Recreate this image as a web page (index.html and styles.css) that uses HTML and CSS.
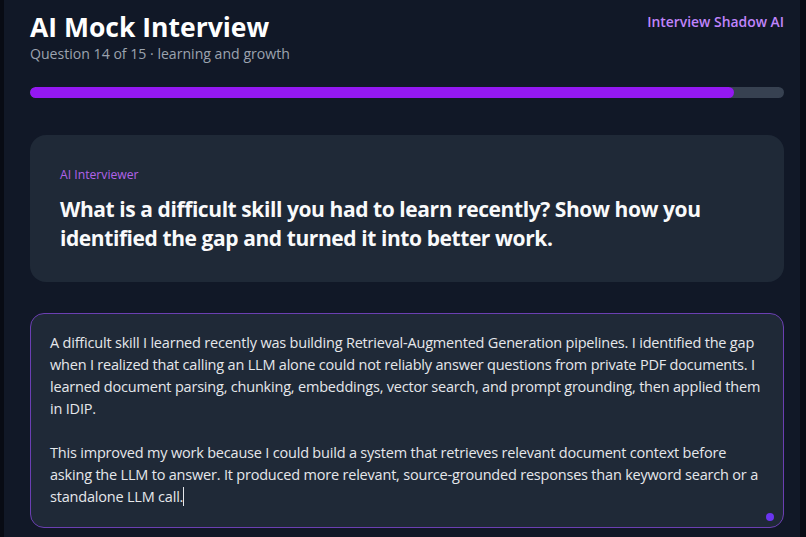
FILE: index.html
```html
<!DOCTYPE html>
<html lang="en">
<head>
<meta charset="utf-8">
<title>AI Mock Interview</title>
<link rel="stylesheet" href="styles.css">
</head>
<body>
<main class="app">
  <header class="top">
    <div class="heading">
      <h1 class="title">AI Mock Interview</h1>
      <p class="subtitle">Question 14 of 15 · learning and growth</p>
    </div>
    <div class="brand">Interview Shadow AI</div>
  </header>

  <div class="progress"><div class="progress-fill" style="width: 93.33%"></div></div>

  <section class="question-card">
    <div class="label">AI Interviewer</div>
    <h2 class="question">What is a difficult skill you had to learn recently? Show how you<br>identified the gap and turned it into better work.</h2>
  </section>

  <div class="answer">
    <div class="answer-text">A difficult skill I learned recently was building Retrieval-Augmented Generation pipelines. I identified the gap<br>when I realized that calling an LLM alone could not reliably answer questions from private PDF documents. I<br>learned document parsing, chunking, embeddings, vector search, and prompt grounding, then applied them<br>in IDIP.<br><br>This improved my work because I could build a system that retrieves relevant document context before<br>asking the LLM to answer. It produced more relevant, source-grounded responses than keyword search or a<br>standalone LLM call.<span class="caret"></span></div>
    <span class="dot"></span>
  </div>
</main>
</body>
</html>
```
FILE: styles.css
```css
* { box-sizing: border-box; }
html, body { margin: 0; height: 100%; }
body {
  background: #080b14;
  font-family: "Open Sans", "Noto Sans", sans-serif;
  overflow: hidden;
}
.app {
  margin: 0 6px 0 4px;
  min-height: 100%;
  background: #111827;
  padding: 10px 16px 0 26px;
}
.top {
  display: flex;
  justify-content: space-between;
  align-items: flex-start;
}
.title {
  margin: 0;
  font-size: 26.5px;
  line-height: 34px;
  font-weight: 700;
  color: #ffffff;
}
.subtitle {
  margin: 0;
  font-size: 14.1px;
  line-height: 20px;
  color: #9ca3af;
}
.brand {
  margin-top: 2px;
  font-size: 13.9px;
  font-weight: 600;
  color: #c084fc;
}
.progress {
  margin-top: 23px;
  height: 11px;
  border-radius: 999px;
  background: #374151;
  overflow: hidden;
}
.progress-fill {
  height: 100%;
  border-radius: 999px;
  background: #9418f2;
}
.question-card {
  margin-top: 37px;
  background: #1f2937;
  border-radius: 16px;
  padding: 31px 30px 28px;
  height: 147px;
}
.label {
  font-size: 12.2px;
  line-height: 18px;
  color: #b163e8;
}
.question {
  margin: 11px 0 0;
  font-size: 21px;
  line-height: 29px;
  font-weight: 700;
  letter-spacing: -0.42px;
  color: #f9fafb;
}
.answer {
  position: relative;
  margin-top: 31px;
  height: 215px;
  background: #1f2937;
  border: 1.5px solid #6b3fb2;
  border-radius: 14px;
  padding: 18px 19px;
}
.answer-text {
  font-size: 14.5px;
  line-height: 22px;
  letter-spacing: -0.2px;
  color: #e5e7eb;
  white-space: nowrap;
}
.caret {
  display: inline-block;
  width: 1px;
  height: 19px;
  background: #e5e7eb;
  vertical-align: -4px;
}
.dot {
  position: absolute;
  right: 9px;
  bottom: 6px;
  width: 8px;
  height: 8px;
  border-radius: 50%;
  background: #6a35f0;
}
```
